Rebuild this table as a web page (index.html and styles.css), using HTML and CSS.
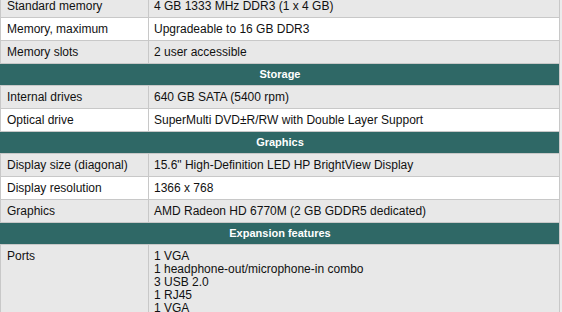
FILE: index.html
```html
<!DOCTYPE html>
<html>
<head>
<meta charset="utf-8">
<link rel="stylesheet" href="styles.css">
</head>
<body>
<table class="specs">
  <tr class="alt"><td class="label">Standard memory</td><td class="value">4 GB 1333 MHz DDR3 (1 x 4 GB)</td></tr>
  <tr><td class="label">Memory, maximum</td><td class="value">Upgradeable to 16 GB DDR3</td></tr>
  <tr class="alt"><td class="label">Memory slots</td><td class="value">2 user accessible</td></tr>
  <tr class="section"><th colspan="2">Storage</th></tr>
  <tr class="alt"><td class="label">Internal drives</td><td class="value">640 GB SATA (5400 rpm)</td></tr>
  <tr><td class="label">Optical drive</td><td class="value">SuperMulti DVD±R/RW with Double Layer Support</td></tr>
  <tr class="section"><th colspan="2">Graphics</th></tr>
  <tr class="alt"><td class="label">Display size (diagonal)</td><td class="value">15.6" High-Definition LED HP BrightView Display</td></tr>
  <tr><td class="label">Display resolution</td><td class="value">1366 x 768</td></tr>
  <tr class="alt"><td class="label">Graphics</td><td class="value">AMD Radeon HD 6770M (2 GB GDDR5 dedicated)</td></tr>
  <tr class="section"><th colspan="2">Expansion features</th></tr>
  <tr class="alt multi"><td class="label">Ports</td><td class="value">1 VGA<br>1 headphone-out/microphone-in combo<br>3 USB 2.0<br>1 RJ45<br>1 VGA</td></tr>
</table>
</body>
</html>
```
FILE: styles.css
```css
html, body {
  margin: 0;
  padding: 0;
  background: #ececec;
}
body {
  font-family: "Liberation Sans", Arial, Helvetica, sans-serif;
  font-size: 12px;
  color: #111;
  overflow: hidden;
}
.specs {
  width: 560px;
  margin-top: -6px;
  border-collapse: collapse;
  background: #ffffff;
}
.specs td {
  border: 1px solid #c8c8c8;
  padding: 4px 5px 4px 6px;
  line-height: 14px;
  height: 14px;
  vertical-align: top;
}
.specs td.label {
  width: 136px;
}
.specs td.value {
  padding-left: 5px;
}
.specs tr.alt td {
  background: #e8e8e8;
}
.specs tr.section th {
  background: #2f6866;
  color: #ffffff;
  font-size: 11px;
  font-weight: bold;
  text-align: center;
  border: 1px solid #c8c8c8;
  border-left-color: #2f6866;
  padding: 3px 0 4px;
  line-height: 14px;
}
.specs tr.multi td {
  line-height: 13px;
  padding-top: 5px;
}
```
